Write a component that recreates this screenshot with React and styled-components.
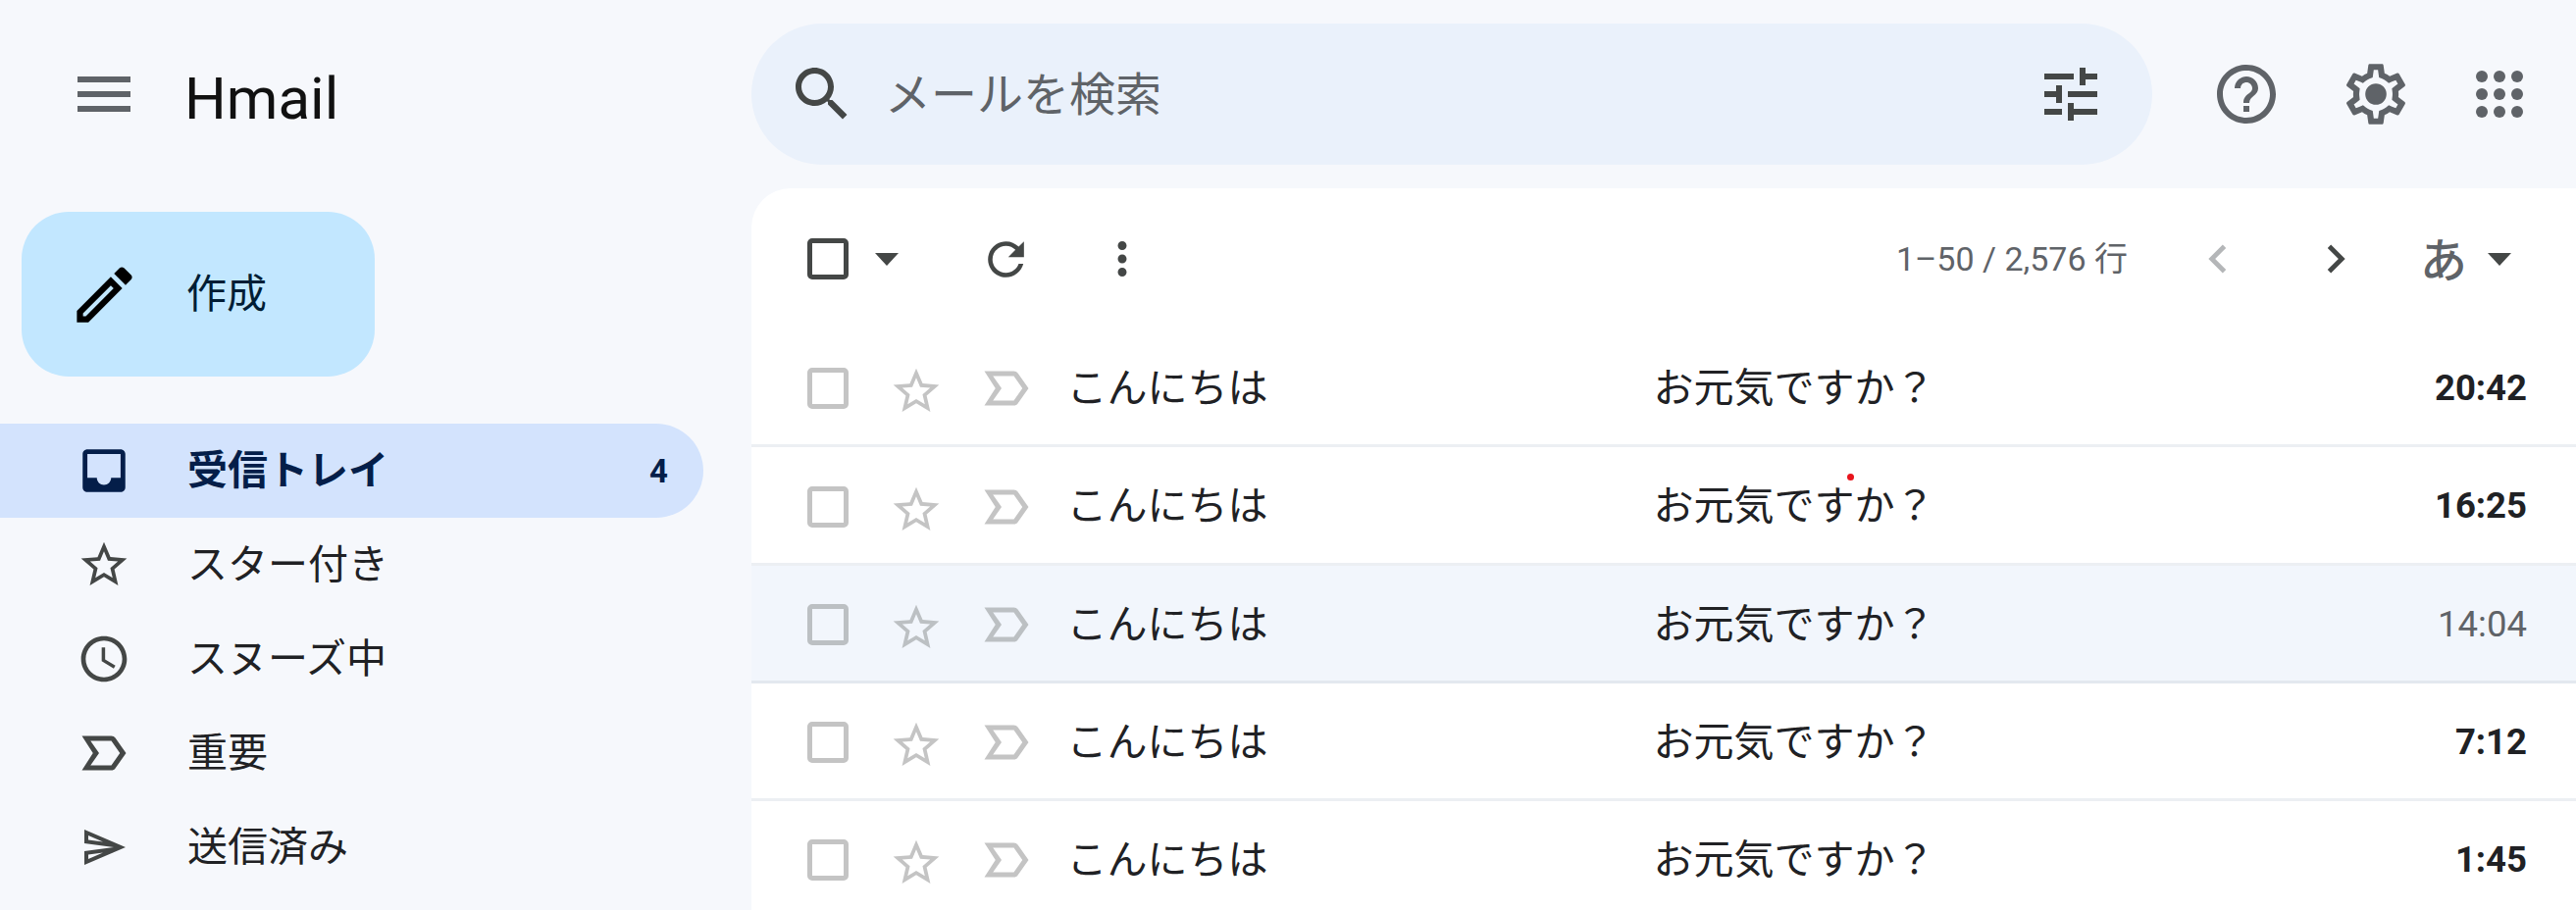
import React from "react";
import styled, { createGlobalStyle } from "styled-components";

const PATHS = {
  menu: "M3 18h18v-2H3v2zm0-5h18v-2H3v2zm0-7v2h18V6H3z",
  edit: "M3 17.25V21h3.75L17.81 9.94l-3.75-3.75L3 17.25zM5.92 19H5v-.92l9.06-9.06.92.92L5.92 19zM20.71 5.63l-2.34-2.34c-.2-.2-.45-.29-.71-.29s-.51.1-.7.29l-1.83 1.83 3.75 3.75 1.83-1.83c.39-.39.39-1.02 0-1.41z",
  inbox: "M19 3H4.99c-1.11 0-1.98.89-1.98 2L3 19c0 1.1.88 2 1.99 2H19c1.1 0 2-.9 2-2V5c0-1.11-.9-2-2-2zm0 12h-4c0 1.66-1.35 3-3 3s-3-1.34-3-3H4.99V5H19v10z",
  star: "M22 9.24l-7.19-.62L12 2 9.19 8.63 2 9.24l5.46 4.73L5.82 21 12 17.27 18.18 21l-1.63-7.03L22 9.24zM12 15.4l-3.76 2.27 1-4.28-3.32-2.88 4.38-.38L12 6.1l1.71 4.04 4.38.38-3.32 2.88 1 4.28L12 15.4z",
  clock: "M11.99 2C6.47 2 2 6.48 2 12s4.47 10 9.99 10C17.52 22 22 17.52 22 12S17.52 2 11.99 2zM12 20c-4.42 0-8-3.58-8-8s3.58-8 8-8 8 3.58 8 8-3.58 8-8 8zm.5-13H11v6l5.25 3.15.75-1.23-4.5-2.67z",
  important: "M15 19H3l4.5-7L3 5h12c.65 0 1.26.31 1.63.84L21 12l-4.37 6.16c-.37.52-.98.84-1.63.84zm-8.5-2H15l3.5-5-3.5-5H6.5l3.5 5-3.5 5z",
  send: "M4.01 6.03l7.51 3.22-7.52-1 .01-2.22m7.5 8.72L4 17.97v-2.22l7.51-1M2.01 3L2 10l15 2-15 2 .01 7L23 12 2.01 3z",
  search: "M15.5 14h-.79l-.28-.27C15.41 12.59 16 11.11 16 9.5 16 5.91 13.09 3 9.5 3S3 5.91 3 9.5 5.91 16 9.5 16c1.61 0 3.09-.59 4.23-1.57l.27.28v.79l5 4.99L20.49 19l-4.99-5zm-6 0C7.01 14 5 11.99 5 9.5S7.01 5 9.5 5 14 7.01 14 9.5 11.99 14 9.5 14z",
  tune: "M3 17v2h6v-2H3zM3 5v2h10V5H3zm10 16v-2h8v-2h-8v-2h-2v6h2zM7 9v2H3v2h4v2h2V9H7zm14 4v-2H11v2h10zm-6-4h2V7h4V5h-4V3h-2v6z",
  help: "M11 18h2v-2h-2v2zm1-16C6.48 2 2 6.48 2 12s4.48 10 10 10 10-4.48 10-10S17.52 2 12 2zm0 18c-4.41 0-8-3.59-8-8s3.59-8 8-8 8 3.59 8 8-3.59 8-8 8zm0-14c-2.21 0-4 1.79-4 4h2c0-1.1.9-2 2-2s2 .9 2 2c0 2-3 1.75-3 5h2c0-2.25 3-2.5 3-5 0-2.21-1.79-4-4-4z",
  gear: "M19.43 12.98c.04-.32.07-.64.07-.98 0-.34-.03-.66-.07-.98l2.11-1.65c.19-.15.24-.42.12-.64l-2-3.46c-.09-.16-.26-.25-.44-.25-.06 0-.12.01-.17.03l-2.49 1c-.52-.4-1.08-.73-1.69-.98l-.38-2.65C14.46 2.18 14.25 2 14 2h-4c-.25 0-.46.18-.49.42l-.38 2.65c-.61.25-1.17.59-1.69.98l-2.49-1c-.06-.02-.12-.03-.18-.03-.17 0-.34.09-.43.25l-2 3.46c-.13.22-.07.49.12.64l2.11 1.65c-.04.32-.07.65-.07.98 0 .33.03.66.07.98l-2.11 1.65c-.19.15-.24.42-.12.64l2 3.46c.09.16.26.25.44.25.06 0 .12-.01.17-.03l2.49-1c.52.4 1.08.73 1.69.98l.38 2.65c.03.24.24.42.49.42h4c.25 0 .46-.18.49-.42l.38-2.65c.61-.25 1.17-.59 1.69-.98l2.49 1c.06.02.12.03.18.03.17 0 .34-.09.43-.25l2-3.46c.12-.22.07-.49-.12-.64l-2.11-1.65zm-1.98-1.71c.04.31.05.52.05.73 0 .21-.02.43-.05.73l-.14 1.13.89.7 1.08.84-.7 1.21-1.27-.51-1.04-.42-.9.68c-.43.32-.84.56-1.25.73l-1.06.43-.16 1.13-.2 1.35h-1.4l-.19-1.35-.16-1.13-1.06-.43c-.43-.18-.83-.41-1.23-.71l-.91-.7-1.06.43-1.27.51-.7-1.21 1.08-.84.89-.7-.14-1.13c-.03-.31-.05-.54-.05-.74s.02-.43.05-.73l.14-1.13-.89-.7-1.08-.84.7-1.21 1.27.51 1.04.42.9-.68c.43-.32.84-.56 1.25-.73l1.06-.43.16-1.13.2-1.35h1.39l.19 1.35.16 1.13 1.06.43c.43.18.83.41 1.23.71l.91.7 1.06-.43 1.27-.51.7 1.21-1.07.85-.89.7.14 1.13zM12 8.5a3.5 3.5 0 1 0 0 7 3.5 3.5 0 0 0 0-7z",
  refresh: "M17.65 6.35C16.2 4.9 14.21 4 12 4c-4.42 0-7.99 3.58-7.99 8s3.57 8 7.99 8c3.73 0 6.84-2.55 7.73-6h-2.08c-.82 2.33-3.04 4-5.65 4-3.31 0-6-2.69-6-6s2.69-6 6-6c1.66 0 3.14.69 4.22 1.78L13 11h7V4l-2.35 2.35z",
  more: "M12 8c1.1 0 2-.9 2-2s-.9-2-2-2-2 .9-2 2 .9 2 2 2zm0 2c-1.1 0-2 .9-2 2s.9 2 2 2 2-.9 2-2-.9-2-2-2zm0 6c-1.1 0-2 .9-2 2s.9 2 2 2 2-.9 2-2-.9-2-2-2z",
  prev: "M15.41 7.41L14 6l-6 6 6 6 1.41-1.41L10.83 12z",
  next: "M8.59 16.59L10 18l6-6-6-6-1.41 1.41L13.17 12z",
  caret: "M0 0h24L12 13z",
};

const GlobalStyle = createGlobalStyle`
  html, body { margin: 0; padding: 0; height: 100%; overflow: hidden; background: #f6f8fc; }
  * { box-sizing: border-box; }
  body { font-family: Roboto, "Noto Sans CJK JP", sans-serif; color: #202124; }
`;

const Svg = styled.svg`
  display: block;
  flex: none;
  width: ${(p) => p.$size}px;
  height: ${(p) => p.$size}px;
  fill: ${(p) => p.$color || "#444746"};
`;

const Icon = ({ name, size, color }) => (
  <Svg viewBox="0 0 24 24" $size={size} $color={color}>
    <path d={PATHS[name]} />
  </Svg>
);

const Caret = styled.svg`
  display: block;
  flex: none;
  width: 24px;
  height: 13px;
  fill: #444746;
  margin-left: ${(p) => p.$gap}px;
`;

const Page = styled.div`
  display: grid;
  grid-template-columns: 766px 1fr;
  height: 928px;
  width: 2626px;
  overflow: hidden;
  background: #f6f8fc;
`;

const Sidebar = styled.aside`
  display: flex;
  flex-direction: column;
`;

const Brand = styled.div`
  display: flex;
  align-items: center;
  height: 192px;
  padding-left: 70px;
  flex: none;
`;

const Logo = styled.div`
  font-size: 60px;
  line-height: 1;
  margin-left: 46px;
  margin-top: 10px;
  color: #111;
`;

const Compose = styled.button`
  display: flex;
  align-items: center;
  flex: none;
  width: 360px;
  height: 168px;
  margin: 24px 0 48px 22px;
  padding: 0 0 0 47px;
  border: 0;
  border-radius: 48px;
  background: #c2e7ff;
  font: inherit;
  color: #001d35;
`;

const ComposeLabel = styled.span`
  font-size: 41px;
  line-height: 1;
  margin-left: 46px;
`;

const Nav = styled.nav`
  display: flex;
  flex-direction: column;
`;

const NavItem = styled.div`
  display: flex;
  align-items: center;
  width: 717px;
  height: 96px;
  padding-left: 77px;
  padding-right: 36px;
  border-radius: 0 48px 48px 0;
  background: ${(p) => (p.$active ? "#d3e3fd" : "transparent")};
  color: ${(p) => (p.$active ? "#041e49" : "#202124")};
  font-weight: ${(p) => (p.$active ? 700 : 400)};
`;

const NavIcon = styled.span`
  display: flex;
  align-items: center;
  justify-content: center;
  flex: none;
  width: 58px;
  height: 58px;
`;

const NavLabel = styled.span`
  font-size: 41px;
  line-height: 1;
  margin-left: 56px;
`;

const Count = styled.span`
  margin-left: auto;
  font-size: 33px;
  line-height: 1;
`;

const Main = styled.main`
  display: flex;
  flex-direction: column;
  min-width: 0;
`;

const TopBar = styled.header`
  display: flex;
  align-items: center;
  flex: none;
  height: 192px;
`;

const Search = styled.div`
  display: flex;
  align-items: center;
  flex: none;
  width: 1428px;
  height: 144px;
  padding: 0 47px 0 36px;
  border-radius: 72px;
  background: #eaf1fb;
`;

const Placeholder = styled.span`
  font-size: 47px;
  line-height: 1;
  margin-left: 28px;
  margin-right: auto;
  color: #5f6368;
`;

const TopAction = styled.span`
  display: flex;
  align-items: center;
  justify-content: center;
  flex: none;
  width: ${(p) => p.$width}px;
  margin-left: ${(p) => p.$gap || 0}px;
`;

const Apps = styled.span`
  display: grid;
  grid-template-columns: repeat(3, 12px);
  grid-auto-rows: 12px;
  gap: 6px;
  & > i { display: block; border-radius: 50%; background: #5f6368; }
`;

const Panel = styled.section`
  flex: 1;
  background: #fff;
  border-radius: 40px 0 0 0;
  overflow: hidden;
`;

const Toolbar = styled.div`
  display: flex;
  align-items: center;
  height: 144px;
  padding: 0 66px 0 57px;
`;

const CheckBox = styled.span`
  display: block;
  flex: none;
  width: 42px;
  height: 42px;
  border: 5px solid ${(p) => p.$color};
  border-radius: 5px;
`;

const ToolSlot = styled.span`
  display: flex;
  align-items: center;
  justify-content: center;
  flex: none;
  width: 80px;
  margin-left: ${(p) => p.$gap}px;
`;

const Range = styled.span`
  margin-left: auto;
  font-size: 34px;
  line-height: 1;
  color: #5f6368;
`;

const InputGlyph = styled.span`
  display: block;
  flex: none;
  width: 48px;
  height: 46px;
  margin-left: 46px;
  margin-top: 4px;
  overflow: hidden;
  font-size: 48px;
  line-height: 48px;
  font-weight: 500;
  color: #5f6368;
`;

const Row = styled.div`
  display: flex;
  align-items: center;
  height: ${(p) => p.$height}px;
  padding: 3px 50px 0 57px;
  border-bottom: 3px solid ${(p) => p.$line};
  background: ${(p) => (p.$hover ? "#f2f6fc" : "#fff")};
`;

const StarSlot = styled.span`
  display: block;
  flex: none;
  margin-left: 40.5px;
  margin-top: 6px;
`;

const MarkSlot = styled.span`
  display: block;
  flex: none;
  margin-left: 34px;
`;

const Sender = styled.span`
  flex: none;
  width: 598px;
  margin-left: 32px;
  font-size: 41px;
  line-height: 1;
`;

const Subject = styled.span`
  position: relative;
  font-size: 41px;
  line-height: 1;
`;

const Dot = styled.span`
  position: absolute;
  left: 197px;
  top: -13px;
  width: 7px;
  height: 7px;
  border-radius: 50%;
  background: #e8141c;
`;

const Time = styled.span`
  margin-left: auto;
  font-size: 36.5px;
  line-height: 1;
  font-weight: ${(p) => (p.$unread ? 700 : 400)};
  color: ${(p) => (p.$unread ? "#202124" : "#5f6368")};
`;

const NAV = [
  { label: "受信トレイ", icon: "inbox", size: 58, count: 4, active: true, color: "#041e49" },
  { label: "スター付き", icon: "star", size: 56 },
  { label: "スヌーズ中", icon: "clock", size: 56 },
  { label: "重要", icon: "important", size: 60 },
  { label: "送信済み", icon: "send", size: 48 },
];

const MAILS = [
  { time: "20:42", unread: true, height: 120, line: "#eceff3" },
  { time: "16:25", unread: true, height: 121, dot: true, line: "#eceff3" },
  { time: "14:04", hover: true, height: 120, line: "#e3e8ef" },
  { time: "7:12", unread: true, height: 120, line: "#eceff3" },
  { time: "1:45", unread: true, height: 120, line: "#eceff3" },
];

export default function App() {
  return (
    <Page>
      <GlobalStyle />
      <Sidebar>
        <Brand>
          <Icon name="menu" size={72} color="#5f6368" />
          <Logo>Hmail</Logo>
        </Brand>
        <Compose>
          <Icon name="edit" size={75} color="#000" />
          <ComposeLabel>作成</ComposeLabel>
        </Compose>
        <Nav>
          {NAV.map((n) => (
            <NavItem key={n.label} $active={n.active}>
              <NavIcon>
                <Icon name={n.icon} size={n.size} color={n.color} />
              </NavIcon>
              <NavLabel>{n.label}</NavLabel>
              {n.count && <Count>{n.count}</Count>}
            </NavItem>
          ))}
        </Nav>
      </Sidebar>
      <Main>
        <TopBar>
          <Search>
            <Icon name="search" size={72} />
            <Placeholder>メールを検索</Placeholder>
            <Icon name="tune" size={72} />
          </Search>
          <TopAction $width={132} $gap={30}>
            <Icon name="help" size={72} color="#5f6368" />
          </TopAction>
          <TopAction $width={132}>
            <Icon name="gear" size={74} color="#5f6368" />
          </TopAction>
          <TopAction $width={120}>
            <Apps>
              {Array.from({ length: 9 }, (_, i) => (
                <i key={i} />
              ))}
            </Apps>
          </TopAction>
        </TopBar>
        <Panel>
          <Toolbar>
            <CheckBox $color="#444746" />
            <Caret viewBox="0 0 24 13" $gap={27}>
              <path d={PATHS.caret} />
            </Caret>
            <ToolSlot $gap={69}>
              <Icon name="refresh" size={55} />
            </ToolSlot>
            <ToolSlot $gap={39}>
              <Icon name="more" size={54} />
            </ToolSlot>
            <Range>1–50 / 2,576 行</Range>
            <ToolSlot $gap={52}>
              <Icon name="prev" size={58} color="#b4b6b8" />
            </ToolSlot>
            <ToolSlot $gap={40}>
              <Icon name="next" size={58} />
            </ToolSlot>
            <InputGlyph>あ</InputGlyph>
            <Caret viewBox="0 0 24 13" $gap={21}>
              <path d={PATHS.caret} />
            </Caret>
          </Toolbar>
          {MAILS.map((m) => (
            <Row key={m.time} $hover={m.hover} $height={m.height} $line={m.line}>
              <CheckBox $color={m.hover ? "#bcc0c3" : "#c4c4c4"} />
              <StarSlot>
                <Icon name="star" size={56} color={m.hover ? "#bcc0c3" : "#c4c4c4"} />
              </StarSlot>
              <MarkSlot>
                <Icon name="important" size={60} color={m.hover ? "#bcc0c3" : "#c4c4c4"} />
              </MarkSlot>
              <Sender>こんにちは</Sender>
              <Subject>
                お元気ですか？
                {m.dot && <Dot />}
              </Subject>
              <Time $unread={m.unread}>{m.time}</Time>
            </Row>
          ))}
        </Panel>
      </Main>
    </Page>
  );
}
